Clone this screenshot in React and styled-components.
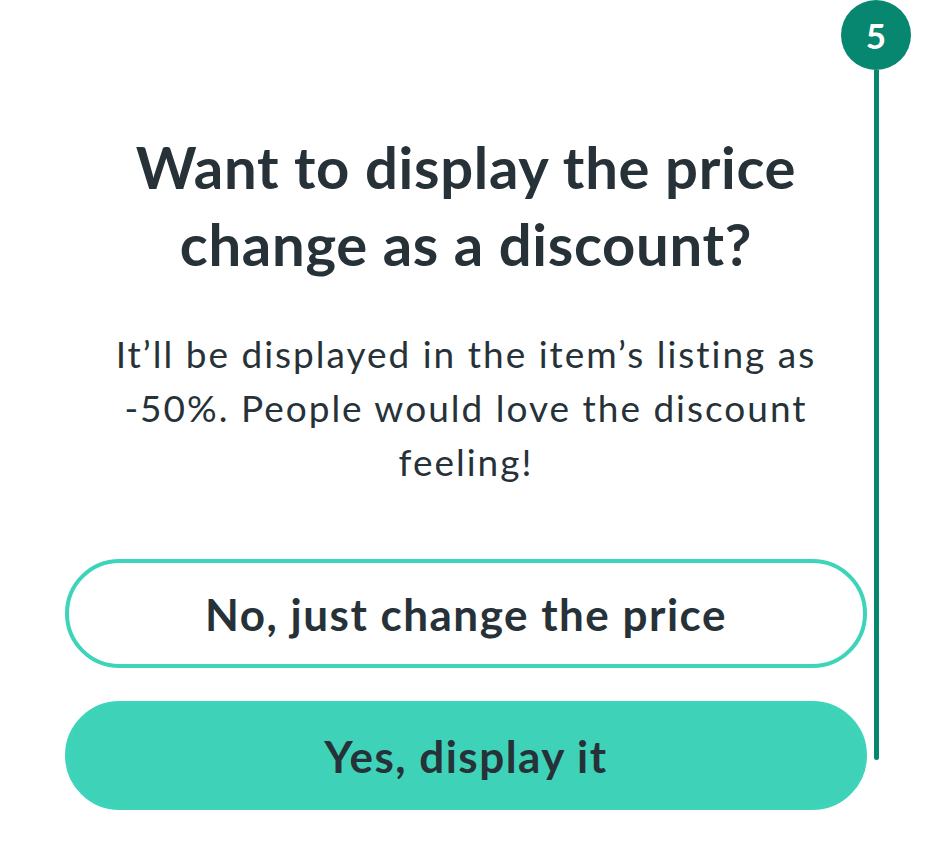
import React from 'react'
import styled, { createGlobalStyle } from 'styled-components'

const GlobalStyle = createGlobalStyle`
  html, body {
    margin: 0;
    padding: 0;
    background: #ffffff;
  }
  body {
    font-family: Lato, "Noto Sans", sans-serif;
    color: #263238;
  }
`

const Screen = styled.div`
  position: relative;
  width: 933px;
  height: 853px;
  overflow: hidden;
  background: #ffffff;
`

const Content = styled.section`
  display: flex;
  flex-direction: column;
  align-items: center;
  padding: 128px 66px 0 65px;
`

const Title = styled.h1`
  margin: 0;
  font-size: 58px;
  line-height: 77px;
  font-weight: 700;
  letter-spacing: 0.7px;
  text-align: center;
  color: #263238;
  max-width: 700px;
`

const Body = styled.p`
  margin: 45px 0 0;
  font-size: 37px;
  line-height: 54px;
  font-weight: 400;
  letter-spacing: 2px;
  text-align: center;
  color: #263238;
  max-width: 730px;
`

const Actions = styled.div`
  align-self: stretch;
  display: flex;
  flex-direction: column;
  gap: 33px;
  margin-top: 70px;
`

const Button = styled.button`
  height: 109px;
  border-radius: 55px;
  border: 4px solid #3ed4b9;
  background: ${p => (p.$primary ? '#3ed3b9' : '#ffffff')};
  font-family: Lato, "Noto Sans", sans-serif;
  font-size: 44px;
  font-weight: 700;
  letter-spacing: 1.5px;
  color: #263238;
  cursor: pointer;
`

const Step = styled.div`
  position: absolute;
  top: 0;
  left: 841px;
  width: 70px;
  display: flex;
  flex-direction: column;
  align-items: center;
`

const Badge = styled.div`
  width: 70px;
  height: 70px;
  border-radius: 50%;
  background: #078770;
  color: #ffffff;
  display: flex;
  align-items: center;
  justify-content: center;
  font-size: 35px;
  font-weight: 700;
`

const Track = styled.div`
  width: 5px;
  height: 690px;
  background: #078770;
  border-radius: 0 0 3px 3px;
`

export default function App() {
  return (
    <Screen>
      <GlobalStyle />
      <Content>
        <Title>Want to display the price change as a discount?</Title>
        <Body>It’ll be displayed in the item’s listing as -50%. People would love the discount feeling!</Body>
        <Actions>
          <Button>No, just change the price</Button>
          <Button $primary>Yes, display it</Button>
        </Actions>
      </Content>
      <Step>
        <Badge>5</Badge>
        <Track />
      </Step>
    </Screen>
  )
}
